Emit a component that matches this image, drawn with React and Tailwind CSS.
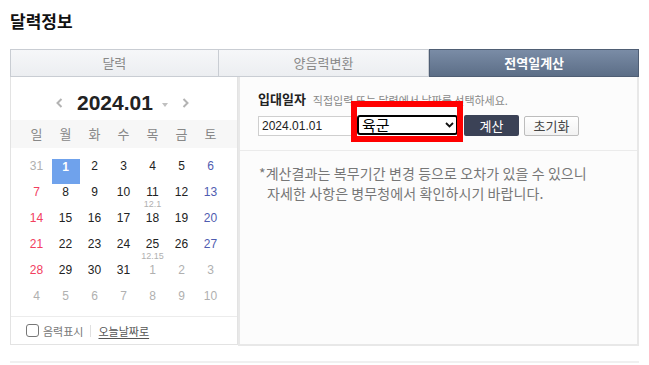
import React from "react";

const rows = [
  [
    { d: "31", o: true },
    { d: "1", sel: true },
    { d: "2" },
    { d: "3" },
    { d: "4" },
    { d: "5" },
    { d: "6" },
  ],
  [
    { d: "7" },
    { d: "8" },
    { d: "9" },
    { d: "10" },
    { d: "11", l: "12.1" },
    { d: "12" },
    { d: "13" },
  ],
  [
    { d: "14" },
    { d: "15" },
    { d: "16" },
    { d: "17" },
    { d: "18" },
    { d: "19" },
    { d: "20" },
  ],
  [
    { d: "21" },
    { d: "22" },
    { d: "23" },
    { d: "24" },
    { d: "25", l: "12.15" },
    { d: "26" },
    { d: "27" },
  ],
  [
    { d: "28" },
    { d: "29" },
    { d: "30" },
    { d: "31" },
    { d: "1", o: true },
    { d: "2", o: true },
    { d: "3", o: true },
  ],
  [
    { d: "4", o: true },
    { d: "5", o: true },
    { d: "6", o: true },
    { d: "7", o: true },
    { d: "8", o: true },
    { d: "9", o: true },
    { d: "10", o: true },
  ],
];

const weekdays = ["일", "월", "화", "수", "목", "금", "토"];

function dayColor(cell, col) {
  if (cell.sel) return "text-white font-bold";
  if (cell.o) return "text-[#b0b0b0]";
  if (col === 0) return "text-[#f2405f]";
  if (col === 6) return "text-[#4f5cb0]";
  return "text-[#222]";
}

function Chevron({ dir }) {
  return (
    <svg width="7" height="10" viewBox="0 0 7 10">
      {dir === "left" ? (
        <path d="M5.5 1 L1.5 5 L5.5 9" fill="none" stroke="#b3b3b3" strokeWidth="2" />
      ) : (
        <path d="M1.5 1 L5.5 5 L1.5 9" fill="none" stroke="#b3b3b3" strokeWidth="2" />
      )}
    </svg>
  );
}

export default function App() {
  return (
    <div className="w-[649px] h-[365px] bg-white overflow-hidden relative font-['Noto_Sans_CJK_KR',sans-serif]">
      <h2 className="h-[49px] pl-[10px] pt-[10px] text-[17px] leading-[21px] font-bold text-[#111]">
        달력정보
      </h2>

      {/* Tabs */}
      <div className="mx-[10px] flex h-[28px]">
        <div className="w-[209px] h-full border border-[#c9cdd3] bg-gradient-to-b from-[#f6f7f9] to-[#eceef1] flex items-center justify-center text-[13px] text-[#888]">
          달력
        </div>
        <div className="w-[211px] h-full border-y border-r border-[#c9cdd3] bg-gradient-to-b from-[#f6f7f9] to-[#eceef1] flex items-center justify-center text-[13px] text-[#888]">
          양음력변환
        </div>
        <div className="w-[210px] h-full border border-[#4f5e74] bg-gradient-to-b from-[#7a8ca6] to-[#5c6e87] flex items-center justify-center text-[13px] font-bold text-white">
          전역일계산
        </div>
      </div>

      {/* Content */}
      <div className="mx-[10px] flex h-[269px]">
        {/* Calendar */}
        <div className="w-[228px] h-[268px] border-x border-b border-[#e3e3e3] flex flex-col">
          <div className="h-[43px] flex items-start pl-[45px] pt-[15px]">
            <div className="h-[22px] flex items-center">
              <Chevron dir="left" />
            </div>
            <div className="ml-[14px] h-[22px] flex items-center text-[21px] leading-[22px] font-bold text-[#222] font-['Liberation_Sans',Arial,sans-serif]">
              2024.01
            </div>
            <div className="ml-[9px] h-[22px] flex items-center pt-[3px]">
              <svg width="6" height="4" viewBox="0 0 6 4">
                <path d="M0 0 L6 0 L3 4 Z" fill="#c0c0c0" />
              </svg>
            </div>
            <div className="ml-[14px] h-[22px] flex items-center">
              <Chevron dir="right" />
            </div>
          </div>
          <div className="h-[28px] bg-[#f7f7f7] grid grid-cols-[repeat(7,29px)] pl-[11px] items-center">
            {weekdays.map((w) => (
              <div key={w} className="text-center text-[13px] leading-[16px] text-[#888]">
                {w}
              </div>
            ))}
          </div>
          <div className="pt-[11px] pl-[11px] grid grid-cols-[repeat(7,29px)] auto-rows-[26px]">
            {rows.map((r, ri) =>
              r.map((c, ci) => (
                <div key={ri + "-" + ci} className="flex justify-center">
                  <div
                    className={
                      "w-[28px] h-[25px] flex flex-col items-center font-['Liberation_Sans',Arial,sans-serif] " +
                      (c.sel ? "bg-[#6fa2ec] pt-[1px]" : "")
                    }
                  >
                    <span className={"text-[12px] leading-[14px] " + dayColor(c, ci)}>{c.d}</span>
                    {c.l && (
                      <span className="text-[9px] leading-[10px] text-[#b0b0b0]">{c.l}</span>
                    )}
                  </div>
                </div>
              ))
            )}
          </div>
          <div className="mt-auto h-[28px] border-t border-[#ececec] flex items-center pl-[15px]">
            <div className="w-[13px] h-[13px] border border-[#777] rounded-[3px] bg-white" />
            <span className="ml-[4px] text-[11px] leading-[14px] text-[#777]">음력표시</span>
            <span className="ml-[7px] w-px h-[12px] bg-[#e0e0e0]" />
            <span className="ml-[7px] text-[11px] leading-[14px] text-[#555] underline underline-offset-2">
              오늘날짜로
            </span>
          </div>
        </div>

        {/* Right panel */}
        <div className="flex-1 h-[269px] border-l-2 border-r-2 border-b-2 border-[#e8e8e8] bg-[#fcfcfc] flex flex-col">
          <div className="pl-[18px] pt-[14px] flex items-end">
            <span className="text-[13px] leading-[16px] font-bold text-[#222]">입대일자</span>
            <span className="ml-[7px] text-[11px] leading-[14px] text-[#888]">
              직접입력 또는 달력에서 날짜를 선택하세요.
            </span>
          </div>
          <div className="pl-[18px] mt-[8px] flex items-start">
            <div className="w-[95px] h-[20px] mt-[1px] border border-[#cfcfcf] bg-white flex items-center pl-[3px] text-[12px] text-[#222] font-['Liberation_Sans',Arial,sans-serif]">
              2024.01.01
            </div>
            <div className="ml-[4px] w-[101px] h-[20px] border-2 border-black rounded-[3px] bg-white flex items-center justify-between pl-[3px] pr-[2px]">
              <span className="text-[15px] leading-[16px] text-black">육군</span>
              <svg width="9" height="6" viewBox="0 0 9 6">
                <path d="M1 1 L4.5 4.5 L8 1" fill="none" stroke="#111" strokeWidth="1.8" />
              </svg>
            </div>
            <div className="ml-[6px] w-[55px] h-[21px] bg-[#3b4256] rounded-[2px] flex items-center justify-center text-[13px] text-white">
              계산
            </div>
            <div className="ml-[5px] w-[55px] h-[20px] mt-[1px] border border-[#bdbdbd] rounded-[2px] bg-gradient-to-b from-white to-[#f2f2f2] flex items-center justify-center text-[13px] text-[#444]">
              초기화
            </div>
          </div>
          <div className="mt-[14px] h-px bg-[#ebebeb]" />
          <div className="pl-[19px] pt-[12px] text-[14px] leading-[20px] text-[#777] tracking-[0.1px]">
            <div>*계산결과는 복무기간 변경 등으로 오차가 있을 수 있으니</div>
            <div className="pl-[8px]">자세한 사항은 병무청에서 확인하시기 바랍니다.</div>
          </div>
        </div>
      </div>

      <div className="mx-[10px] mt-[15px] h-[2px] bg-[#f0f0f0]" />

      {/* red annotation box */}
      <div className="absolute left-[351px] top-[101px] w-[112px] h-[41px] border-[6px] border-[#ff0000]" />
    </div>
  );
}
